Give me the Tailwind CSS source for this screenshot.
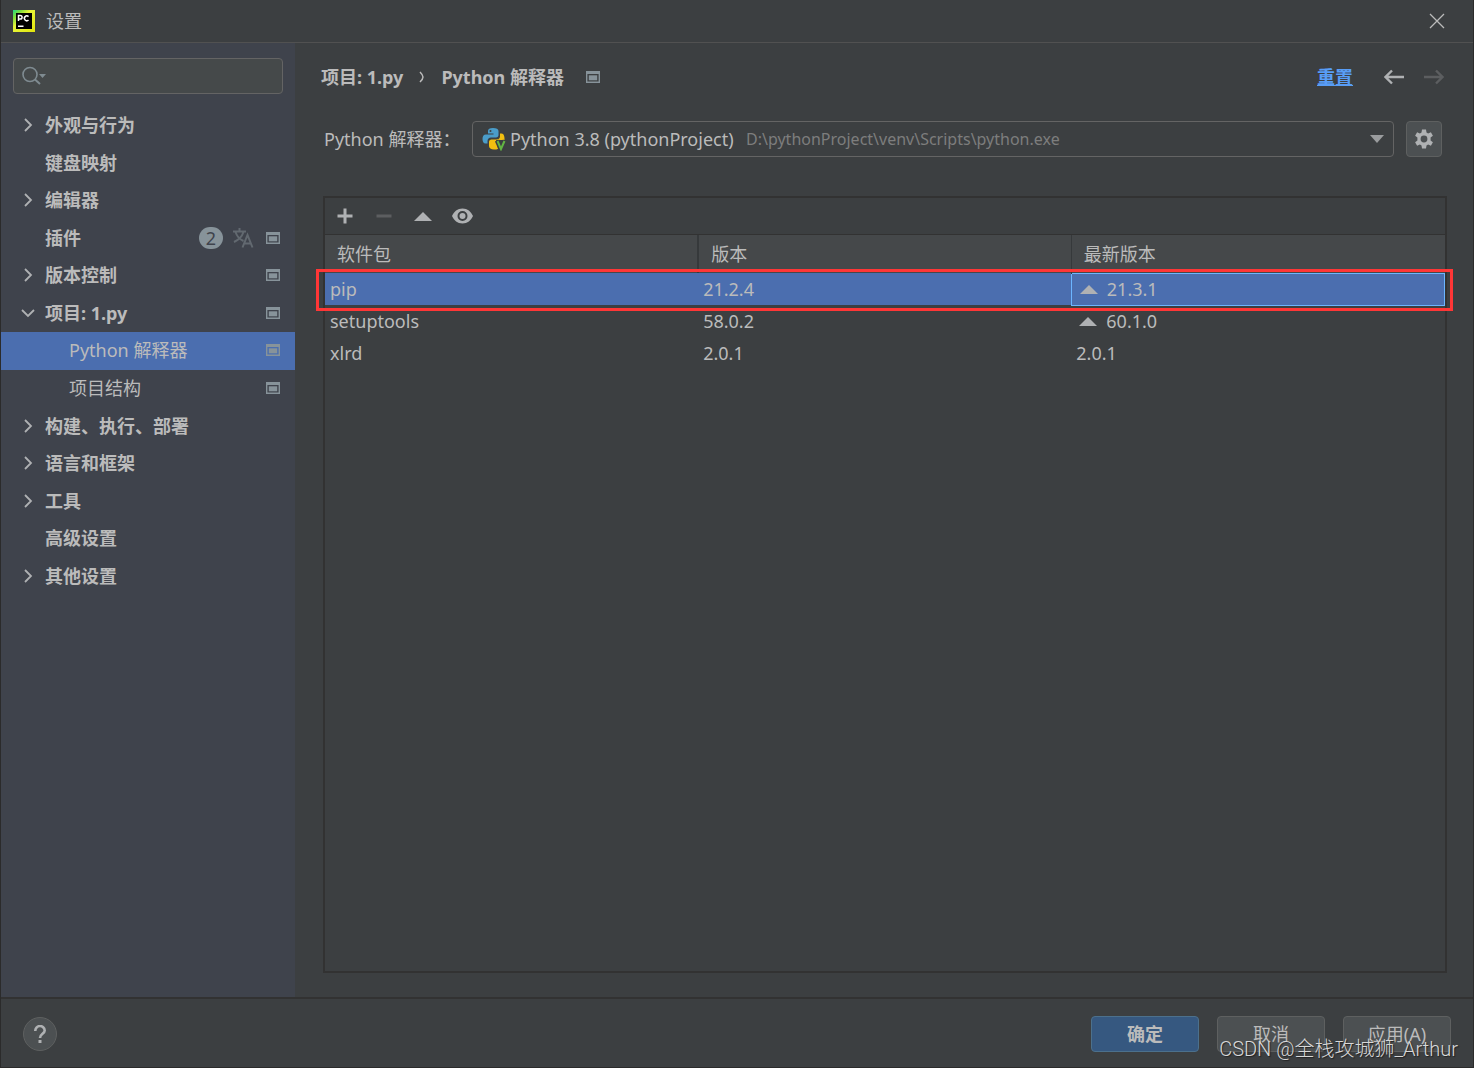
<!DOCTYPE html>
<html lang="zh-CN">
<head>
<meta charset="utf-8">
<title>设置</title>
<script src="https://cdn.jsdelivr.net/npm/@tailwindcss/browser@4"></script>
</head>
<body class="relative flex min-h-screen flex-col border-x border-b border-[#2b2b2b] bg-[#3c3f41] font-['Noto_Sans','Noto_Sans_CJK_SC',sans-serif] text-[18px] leading-6 text-[#bbbbbb]">
<svg class="hidden">
  <symbol id="right" viewBox="0 0 16 16"><path d="M5 2l6 6-6 6" fill="none" stroke="#afb1b3" stroke-width="1.8"/></symbol>
  <symbol id="down" viewBox="0 0 16 16"><path d="M2 5l6 6 6-6" fill="none" stroke="#afb1b3" stroke-width="1.8"/></symbol>
  <symbol id="scope" viewBox="0 0 14 12"><path fill="#87939a" fill-rule="evenodd" d="M0 0h14v12H0zM1.400 3v7.600h11.200V3z"/><path fill="#87939a" d="M2.800 4.300h8.400v5H2.800z"/></symbol>
  <symbol id="up" viewBox="0 0 18 10"><path d="M0 10L9 1l9 9z" fill="#afb1b3"/></symbol>
</svg>

<header class="flex h-[43px] shrink-0 items-center border-b border-[#515151] pl-3 pr-7">
  <svg class="size-[22px]" viewBox="0 0 22 22" aria-hidden="true">
    <defs><linearGradient id="pc" x1="0" y1="0" x2="1" y2="1"><stop offset="0" stop-color="#21d789"/><stop offset=".2" stop-color="#7fe03a"/><stop offset=".4" stop-color="#e6f53a"/><stop offset="1" stop-color="#e3e50c"/></linearGradient></defs>
    <path fill="url(#pc)" d="M0 0h22v22H0z"/><path d="M3 3h16v16H3z"/>
    <path d="M5.500 11V5.500h1.800a1.700 1.700 0 010 3.600H5.500M15.500 6.600a2.400 2.400 0 10 0 3.400" fill="none" stroke="#fff" stroke-width="1.500"/>
    <path fill="#fff" d="M5 15.500h5.500v1.500H5z"/>
  </svg>
  <h1 class="ml-[11px] flex-1">设置</h1>
  <button aria-label="关闭"><svg class="size-4" viewBox="0 0 16 16"><path d="M1 1l14 14M15 1L1 15" stroke="#bbb" stroke-width="1.300"/></svg></button>
</header>

<div class="flex flex-1">
  <aside class="w-[294px] shrink-0 bg-[#3f434c] pt-[15px]">
    <label class="mx-3 flex h-9 items-center rounded border border-[#646464] bg-[#45494a] pl-2">
      <svg class="h-5 w-6 shrink-0" viewBox="0 0 24 20" aria-hidden="true"><circle cx="8" cy="8.500" r="7" fill="none" stroke="#7f8b91" stroke-width="1.600"/><path d="M13 13.500l5 4.500" stroke="#7f8b91" stroke-width="2"/><path d="M17 8h7l-3.500 4z" fill="#7f8b91"/></svg>
      <input type="search" aria-label="搜索设置" class="min-w-0 flex-1 bg-transparent px-2 outline-none">
    </label>
    <nav class="mt-[13px]">
      <ul class="flex h-[488px] flex-col font-bold *:flex *:flex-1 *:items-center *:pr-[15px] *:pb-px">
        <li class="gap-[9px] pl-[19px]"><svg class="size-4"><use href="#right"/></svg><a href="#" class="flex-1">外观与行为</a></li>
        <li class="gap-2 pl-[44px]"><a href="#" class="flex-1">键盘映射</a></li>
        <li class="gap-[9px] pl-[19px]"><svg class="size-4"><use href="#right"/></svg><a href="#" class="flex-1">编辑器</a></li>
        <li class="gap-2 pl-[44px]"><a href="#" class="flex-1">插件</a>
          <span class="flex h-[22px] w-6 items-center justify-center rounded-full bg-[#87939a] font-normal text-[#3f434c]">2</span>
          <svg class="ml-[2px] mr-1 h-5 w-[21px]" viewBox="0 0 21 20" aria-hidden="true"><path d="M0 3.500h13M6.500 0v3.500M2.500 4c1.500 4.500 4.500 7.500 8 9M10.500 4c-1.500 4.500-5 8-9.500 10M9.500 19.500L14.500 7l5 12.500M11 15.500h7" fill="none" stroke="#626970" stroke-width="2"/></svg>
          <svg class="h-3 w-[14px]"><use href="#scope"/></svg></li>
        <li class="gap-[9px] pl-[19px]"><svg class="size-4"><use href="#right"/></svg><a href="#" class="flex-1">版本控制</a><svg class="h-3 w-[14px]"><use href="#scope"/></svg></li>
        <li class="gap-[9px] pl-[19px]"><svg class="size-4"><use href="#down"/></svg><a href="#" class="flex-1">项目: 1.py</a><svg class="h-3 w-[14px]"><use href="#scope"/></svg></li>
        <li class="bg-[#4b6eaf] pl-[68px] font-normal"><a href="#" aria-current="page" class="flex-1">Python 解释器</a><svg class="h-3 w-[14px]"><use href="#scope"/></svg></li>
        <li class="pl-[68px] font-normal"><a href="#" class="flex-1">项目结构</a><svg class="h-3 w-[14px]"><use href="#scope"/></svg></li>
        <li class="gap-[9px] pl-[19px]"><svg class="size-4"><use href="#right"/></svg><a href="#" class="flex-1">构建、执行、部署</a></li>
        <li class="gap-[9px] pl-[19px]"><svg class="size-4"><use href="#right"/></svg><a href="#" class="flex-1">语言和框架</a></li>
        <li class="gap-[9px] pl-[19px]"><svg class="size-4"><use href="#right"/></svg><a href="#" class="flex-1">工具</a></li>
        <li class="gap-2 pl-[44px]"><a href="#" class="flex-1">高级设置</a></li>
        <li class="gap-[9px] pl-[19px]"><svg class="size-4"><use href="#right"/></svg><a href="#" class="flex-1">其他设置</a></li>
      </ul>
    </nav>
  </aside>

  <main class="flex min-w-0 flex-1 flex-col px-[26px] pb-6 pt-[22px]">
    <div class="flex h-6 items-center font-bold">
      <a href="#">项目: 1.py</a>
      <svg class="mx-4 h-3 w-[6px]" viewBox="0 0 6 12" aria-hidden="true"><path d="M1 1q3 3 3 5t-3 5" fill="none" stroke="#bbb" stroke-width="1.500"/></svg>
      <h2>Python 解释器</h2>
      <svg class="ml-[22px] h-3 w-[14px]"><use href="#scope"/></svg>
      <a href="#" class="ml-auto text-[#589df6] underline">重置</a>
      <button class="ml-[31px]" aria-label="后退"><svg class="h-4 w-5" viewBox="0 0 20 16"><path d="M20 8H2M8 1.500L1.500 8 8 14.500" fill="none" stroke="#afb1b3" stroke-width="2.400"/></svg></button>
      <button class="ml-5 mr-[3px]" aria-label="前进" disabled><svg class="h-4 w-5" viewBox="0 0 20 16"><path d="M0 8h18M12 1.500L18.500 8 12 14.500" fill="none" stroke="#5c5e60" stroke-width="2.400"/></svg></button>
    </div>

    <div class="mt-8 flex items-center pl-[3px] pr-[5px]">
      <label for="interp" class="w-[148px] shrink-0">Python 解释器：</label>
      <div class="flex h-9 min-w-0 flex-1 items-center rounded border border-[#646464] pl-[9px] pr-[9px]">
        <svg class="size-6 shrink-0" viewBox="0 0 24 24" aria-hidden="true">
          <path fill="#4a9cc9" fill-rule="evenodd" d="M11 1c-3.500 0-5 1-5 3v2.500h5.500v1H4C1.500 7.500.5 9.500.5 12s1 4.500 3 4.500h2V14c0-2 1.500-3.500 3.500-3.500h5c1.500 0 2.500-1 2.500-2.500V4c0-2-2-3-5.500-3zM8.500 3a1 1 0 110 2 1 1 0 010-2z"/>
          <path fill="#f2bf10" d="M18 6.500V9.500c0 2-1.500 3-3.500 3h-5c-1.500 0-2.500 1-2.500 2.500V19c0 2 2 3.500 5 3.500 1.500 0 3 0 4-.8L14 13h8.500c.3-3-.5-6.500-3-6.500z"/>
          <path d="M15 13.500l4 9 4-9" fill="none" stroke="#3c3f41" stroke-width="4.500"/>
          <path d="M15.500 14l3.500 8 3.500-8" fill="none" stroke="#62b543" stroke-width="2"/>
        </svg>
        <select id="interp" class="ml-1 shrink-0 appearance-none bg-transparent outline-none"><option>Python 3.8 (pythonProject)</option></select>
        <span class="ml-3 min-w-0 flex-1 truncate text-[16px] text-[#7d7d7d]">D:\pythonProject\venv\Scripts\python.exe</span>
        <svg class="h-2 w-[14px] shrink-0" viewBox="0 0 14 8" aria-hidden="true"><path d="M0 0h14L7 8z" fill="#9a9c9e"/></svg>
      </div>
      <button class="ml-3 flex size-9 shrink-0 items-center justify-center rounded border border-[#5e6060] bg-[#4c5052]" aria-label="解释器设置">
        <svg class="size-5" viewBox="0 0 20 20"><path fill="#afb1b3" fill-rule="evenodd" d="M8 .5h4l.5 3 1.600.9 2.800-1.100 2 3.400-2.300 1.900v2.800l2.300 1.900-2 3.400-2.800-1.100-1.600.9-.5 3H8l-.5-3-1.600-.9-2.800 1.100-2-3.400 2.300-1.900V8.600L1.100 6.700l2-3.400 2.800 1.100 1.600-.9zM10 6.600a3.400 3.400 0 100 6.800 3.400 3.400 0 000-6.800z"/></svg>
      </button>
    </div>

    <section class="relative ml-[2px] mt-[39px] flex flex-1 flex-col border-2 border-[#323232]">
      <div class="flex h-[37px] items-center gap-[19px] border-b border-[#323232] pl-[10px]">
        <button aria-label="安装"><svg class="size-5" viewBox="0 0 20 20"><path d="M10 2.500v15M2.500 10h15" stroke="#afb1b3" stroke-width="3"/></svg></button>
        <button aria-label="卸载" disabled><svg class="size-5" viewBox="0 0 20 20"><path d="M2.500 10h15" stroke="#5c5e60" stroke-width="3"/></svg></button>
        <button aria-label="升级"><svg class="h-[10px] w-5" viewBox="0 0 20 10"><path d="M1 10l9-9 9 9z" fill="#afb1b3"/></svg></button>
        <button aria-label="显示早期版本"><svg class="h-4 w-[21px]" viewBox="0 0 21 16"><path fill="#afb1b3" fill-rule="evenodd" d="M10.500.5C5.500.5 2 3.500 0 8c2 4.500 5.500 7.500 10.500 7.500S19 12.500 21 8C19 3.500 15.500.5 10.500.5zm0 2.500a5 5 0 110 10 5 5 0 010-10z"/><circle cx="10.500" cy="8" r="3" fill="#afb1b3"/></svg></button>
      </div>
      <table class="w-full table-fixed border-collapse text-left">
        <thead class="bg-[#45484a]">
          <tr class="h-[38px] *:pl-3 *:font-normal"><th>软件包</th><th class="border-l-2 border-[#36393b]">版本</th><th class="border-l border-[#36393b]">最新版本</th></tr>
        </thead>
        <tbody class="*:h-8 *:*:pl-[5px]">
          <tr class="bg-[#4b6eaf]"><td>pip</td><td>21.2.4</td><td class="border border-[#6cb5ff]"><span class="flex items-center gap-[9px] pl-[3px]"><svg class="h-[10px] w-[18px]"><use href="#up"/></svg>21.3.1</span></td></tr>
          <tr><td>setuptools</td><td>58.0.2</td><td><span class="flex items-center gap-[9px] pl-[3px]"><svg class="h-[10px] w-[18px]"><use href="#up"/></svg>60.1.0</span></td></tr>
          <tr><td>xlrd</td><td>2.0.1</td><td>2.0.1</td></tr>
        </tbody>
      </table>
      <div class="pointer-events-none absolute -left-[9px] -right-2 top-[71px] h-[42px] border-3 border-[#ff3636]"></div>
    </section>
  </main>
</div>

<footer class="flex h-[70px] shrink-0 items-center gap-[18px] border-t-2 border-[#323232] pl-[22px] pr-[22px] pt-[2px]">
  <button class="mr-auto flex size-[34px] items-center justify-center rounded-full border border-[#5e6060] bg-[#4c5052]" aria-label="帮助"><svg class="h-[18px] w-3" viewBox="0 0 12 18"><path d="M1.300 6a4.700 4.700 0 119.400-.5c0 3.300-4.700 3.500-4.700 7.500" fill="none" stroke="#afb1b3" stroke-width="2.600"/><path fill="#afb1b3" d="M4.500 15h3v3h-3z"/></svg></button>
  <button class="h-9 w-[108px] rounded border border-[#4c708c] bg-[#365880] font-bold">确定</button>
  <button class="h-9 w-[108px] rounded border border-[#5e6060] bg-[#4c5052]">取消</button>
  <button class="h-9 w-[108px] rounded border border-[#5e6060] bg-[#4c5052]">应用(A)</button>
</footer>
<p class="pointer-events-none absolute bottom-[6px] right-[15px] font-['Roboto','Noto_Sans_CJK_SC',sans-serif] text-[20px] font-light text-[#d8d8d8] [text-shadow:1px_1px_1px_#222]">CSDN @全栈攻城狮_Arthur</p>
</body>
</html>
